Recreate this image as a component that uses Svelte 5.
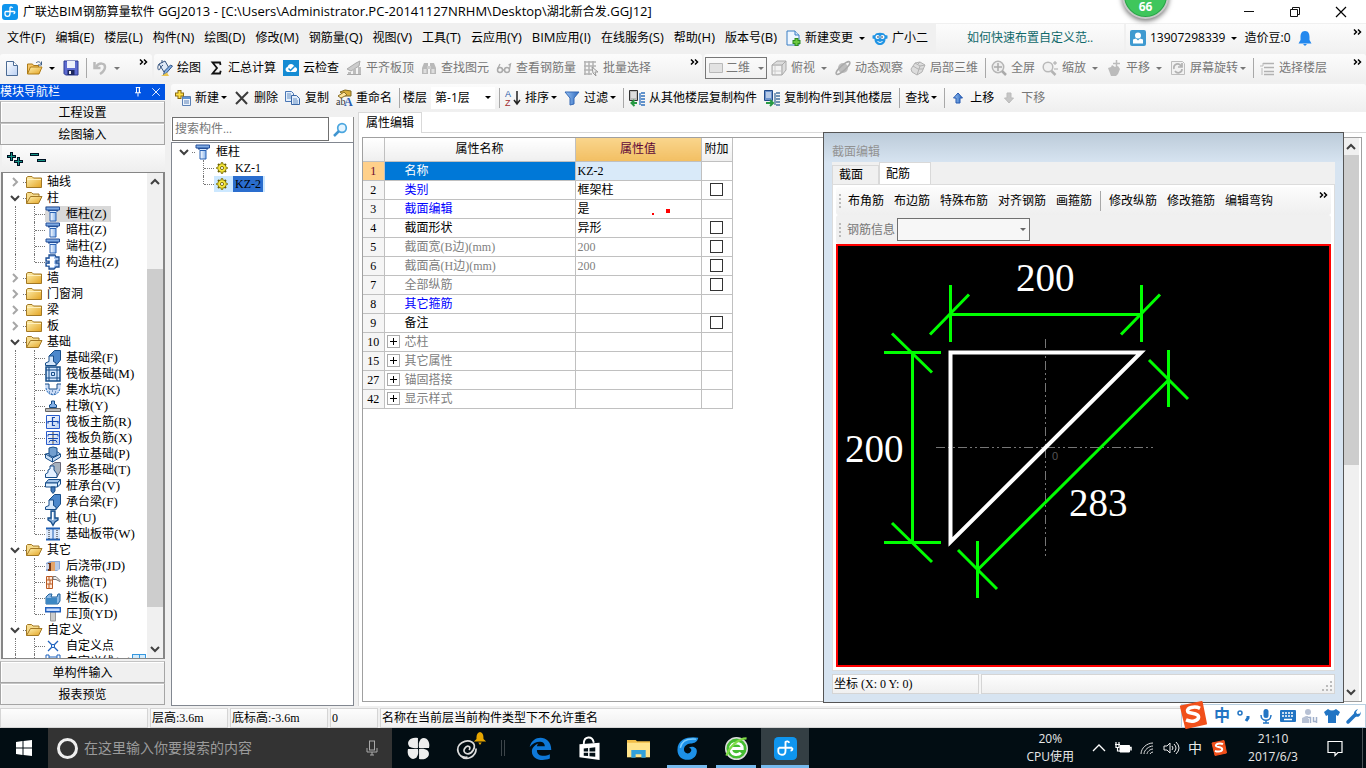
<script>
  const icons = {
    app: '<rect width="16" height="16" rx="3" fill="#0f95ee"/><path d="M8 3.200v6.300c0 4-5 3.500-5 .5M3.500 7.500h9M8 3.500c.8-.8 2.200-.6 2.600.6M12.500 7.500c.8.900 0 2-1 2M3.500 7.500C2.700 8.300 3 9.500 3 10" fill="none" stroke="#fff" stroke-width="1.300"/>',
    docplus: '<path d="M2 1h8l4 4v10H2z" fill="#eef6ff" stroke="#3b7fc4"/><path d="M10 1v4h4" fill="#cfe2f7" stroke="#3b7fc4"/><path d="M11.500 8v8M7.500 12h8" stroke="#2c8a22" stroke-width="4"/><path d="M11.500 9v6M8.500 12h6" stroke="#6cc93f" stroke-width="2"/>',
    robot: '<path d="M3 5C3 2 13 2 13 5l2.500.5v3L13.500 9c0 8-11 8-11 0L.5 8.500v-3z" fill="#2094e4"/><circle cx="5.500" cy="7" r="2" fill="#fff"/><circle cx="10.500" cy="7" r="2" fill="#fff"/><circle cx="6" cy="7" r=".8" fill="#124"/><circle cx="10" cy="7" r=".8" fill="#124"/><path d="M5.500 11.500q2.500 2 5 0" stroke="#fff" fill="none"/>',
    user: '<rect width="16" height="16" rx="2" fill="#3f9ad0"/><circle cx="8" cy="5.500" r="3" fill="#fff"/><path d="M3 13.500V9.500l3-1 2 2 2-2 3 1v4z" fill="#fff"/>',
    bell: '<path d="M8 1c3.500 0 4.500 3 4.500 6v3l2 3.500h-13l2-3.500V7c0-3 1-6 4.500-6z" fill="#2388ee"/><path d="M6 14h4l-2 2z" fill="#2388ee"/>',
    newdoc: '<path d="M2.500 1.500h7l4 4v10h-11z" fill="url(#paper)" stroke="#4b6b94"/><path d="M9.500 1.500v4h4" fill="#fff" stroke="#4b6b94"/>',
    open: '<path d="M.5 14V4h5l1 1.500h5V8" fill="#f6c667" stroke="#ab7a18"/><path d="m.5 14 3-7H15l-3 7z" fill="url(#gold)" stroke="#b07c14"/><path d="M9 3c2-2 4-1.500 5 1M14.500 1.500V5H11" fill="none" stroke="#3e5f87"/>',
    save: '<path d="M1 1h14v14H2.500L1 13.500z" fill="#5d6bd0" stroke="#2d3a93"/><path d="M4 1h8v7H4z" fill="#eef1fb"/><path d="M4.500 10h7v5h-7z" fill="#1d2860"/><path d="M6 11h2v3H6z" fill="#eee"/>',
    undo: '<path d="M2.500 2v6h6" fill="none" stroke="#bbb" stroke-width="2.500"/><path d="M4 7c3-5 9-4 9 0 0 3-2 5-5 7" fill="none" stroke="#bbb" stroke-width="2.500"/>',
    bucket: '<path d="m2 4 6-3 4 7-5 4z" fill="#dfe9f6" stroke="#34537f"/><path d="M2 4c-2 3-1 6 0 6s1-3 4-5M5 3V0" fill="none" stroke="#34537f"/><path d="m15.500 6-6 7-3 2 1-4 6-6z" fill="#7fabe2" stroke="#325688"/><path d="m10 12.500 2 3.500H4z" fill="#eac54f"/>',
    sigma: '<path d="M12.500 5 12 2.500H4.500L9 8l-4.500 5.500H12l.7-2.700" fill="none" stroke="#111" stroke-width="1.800"/>',
    cloud: '<rect width="16" height="16" fill="#148bd3"/><path d="M4.500 12c-3-1-2-5 0-5 1-4 6-4 7 0 3 0 3.500 4 1 5z" fill="#fff"/><path d="m5.500 8.500 2 2 4-4" fill="none" stroke="#148bd3" stroke-width="1.500"/>',
    slab: '<path d="m1 9 9-6 4-2-1 5-8 5z" fill="#ccc" stroke="#aaa"/><path d="M2 12h3v3H2zM7 9h3v6H7zM12 7h3v8h-3z" fill="#bdbdbd"/><path d="M1 14.500h14" stroke="#aaa"/>',
    binoc: '<path d="M1 14V8l2-5h4v11zM9 14V3h4l2 5v6z" fill="#b9b9b9"/><path d="M6 6h4v3H6z" fill="#ccc"/><path d="M2.500 9h3v4h-3zM10.500 9h3v4h-3z" fill="#dedede"/>',
    glasses: '<circle cx="4" cy="10" r="2.500" fill="none" stroke="#aaa" stroke-width="1.500"/><circle cx="11" cy="10" r="2.500" fill="none" stroke="#aaa" stroke-width="1.500"/><path d="M1.500 9 4 4M13.500 9l1-5-2 1M6.500 10h2" fill="none" stroke="#aaa" stroke-width="1.300"/>',
    grid: '<path d="M1 2h12M1 6h12M1 10h8M1 14h8M2 1v14M6 1v14M10 1v7" stroke="#b3b3b3" stroke-width="1.500"/><path d="m9 7 6 5h-3l1 4-3-3z" fill="#eee" stroke="#999"/>',
    flat: '<path d="M1.500 3.500h13v9h-13z" fill="#e2e2e2" stroke="#b9b9b9"/>',
    cube: '<path d="m1 5 5-4h9v9l-4 5H1z" fill="#ddd" stroke="#aaa"/><path d="M1 5h10v10M11 5l4-4" fill="none" stroke="#aaa"/><path d="M2 6h8v8H2z" fill="#f3f3f3"/><path d="M4 6v8M2 11h8" stroke="#ccc"/>',
    orbit: '<circle cx="8" cy="8" r="5" fill="#bdbdbd"/><ellipse cx="8" cy="8" rx="9" ry="2.500" transform="rotate(-42 8 8)" fill="none" stroke="#aaa" stroke-width="1.500"/>',
    part3d: '<path d="m1 9 4-6 5-1 5 3-3 7-5 3-5-3z" fill="#dcdcdc" stroke="#b2b2b2"/><path d="m5 3 5 3-3 9M10 6l5-1M3 6l5 3 5 0M10 2 7 5" fill="none" stroke="#b2b2b2"/>',
    full: '<circle cx="7" cy="7" r="5.700" fill="#eee" stroke="#b5b5b5" stroke-width="1.500"/><path d="M7 3v8M3 7h8" stroke="#aaa" stroke-width="1.500"/><path d="m11 11 4 4" stroke="#aaa" stroke-width="2.500"/>',
    zoom: '<circle cx="6" cy="7" r="4.800" fill="#f1f1f1" stroke="#b9b9b9" stroke-width="1.500"/><path d="m9.500 11 4 4" stroke="#b3b3b3" stroke-width="2.500"/><path d="M13 1v4M11 3h4M12 9h4" stroke="#aaa"/>',
    pan: '<path d="M2 8 5 7l1-2 3 2 3-1 2 3-2 5-2 2H5z" fill="#bbb"/><path d="M10.500 0v8M7 3.500h7" stroke="#bbb" stroke-width="1.500"/>',
    rotate: '<path d="M1.500 1.500h11l2 2v11h-13z" fill="#f2f2f2" stroke="#bdbdbd"/><path d="M4 9c-1-5 5-7 7-3M12 3v4H8M12 9c0 4-5 5-7 2" fill="none" stroke="#b2b2b2" stroke-width="1.700"/>',
    floors: '<path d="M4 3.500h11M5 7.500h10M5 11.500h10M5 14.500h10" stroke="#b2b2b2" stroke-width="1.700"/><path d="M1 6h3V3M3 8v7" fill="none" stroke="#bbb"/>',
    create: '<path d="M7.500 6.500h8v9h-8z" fill="#edf4fd" stroke="#5c81b5"/><path d="M8 7h7v2H8z" fill="#5f92d4"/><path d="M9 11h5M9 13h5" stroke="#5c81b5"/><path d="M4.500 0v9M0 4.500h9" stroke="#8a6b10" stroke-width="4"/><path d="M4.500 1v7M1 4.500h7" stroke="#ffdf45" stroke-width="2"/>',
    del: '<path d="m2 2 11 12M14 2 2 14" stroke="#3b3b3b" stroke-width="2"/>',
    copy: '<path d="M.5 1.500h6l2 2v8h-8z" fill="#e3eefb" stroke="#4a77b5"/><path d="M6.500 5.500h5l3 3v6h-8z" fill="#e3eefb" stroke="#3a67a5"/><path d="M2 4h4M2 6h4M2 8h4M8 9h4M8 11h5M8 13h5" stroke="#6790c4"/>',
    rename: '<path d="m4 2 5-2 6 1v5H9z" fill="#d7ad3c" stroke="#7d6623"/><path d="m2 6 6-4 3 3-6 3z" fill="#ffe39a" stroke="#896e26"/><text x="0" y="15" font-family="Liberation Serif" font-size="10" fill="#333">ab</text><text x="8" y="16" font-family="Liberation Serif" font-weight="bold" font-size="12" fill="#2c5eb0">A</text>',
    sort: '<text x="0" y="7" font-family="Liberation Sans" font-size="9" fill="#2b5daa">A</text><text x="0" y="16" font-family="Liberation Sans" font-size="9" fill="#a22d30">Z</text><path d="M12 1v12M9 10l3 4 3-4" fill="none" stroke="#222" stroke-width="1.500"/>',
    filter: '<path d="M1 2h14l-5 6v6l-4 1V8z" fill="url(#blue)" stroke="#3468b5"/>',
    fromfloor: '<path d="M.5.500h8v10h-8z" fill="#bbb" stroke="#333"/><path d="M2 3h5M2 5h5M2 7h5" stroke="#fff"/><path d="M12 3h4M12 6h4M12 9h4M12 12h4M12 15h4M11 3v12" stroke="#2f70bd" stroke-width="1.300"/><path d="M8 13H3M5.500 10 2.500 13l3 3" fill="none" stroke="#279a43" stroke-width="2"/>',
    tofloor: '<path d="M.5.500h8v10h-8z" fill="#6d93cd" stroke="#234c88"/><path d="M2 3h5M2 5h5M2 7h5" stroke="#fff"/><path d="M12 3h4M12 6h4M12 9h4M12 12h4M12 15h4M11 3v12" stroke="#44719f" stroke-width="1.300"/><path d="M2 13h6M6 10l3 3-3 3" fill="none" stroke="#279a43" stroke-width="2"/>',
    up: '<path d="m8 3 4.500 5H10v5H6V8H3.500z" fill="url(#blue)" stroke="#2558b0"/>',
    down: '<path d="M6 3h4v5h2.500L8 13 3.500 8H6z" fill="#c6c6c6" stroke="#bbb"/>',
    folder: '<path d="M.5 13.500v-10l1.500-1h4l1.500 1.500h8v9.500z" fill="url(#gold)" stroke="#a27824"/><path d="M1 5.500h14" stroke="#fff0bd"/>',
    folderopen: '<path d="M.5 13.500v-10l1-1h4l1.500 1.500h6v3" fill="#f7dc8d" stroke="#a27824"/><path d="m.5 13.500 4-7h11.500l-3.500 7z" fill="url(#gold)" stroke="#a27824"/>',
    column: '<path d="M1 1h13.500v3H1z" fill="#7fabe4" stroke="#244f98"/><path d="M3 4.500h10l-2 2H5z" fill="#d7e9ff" stroke="#244f98"/><path d="M5 6.500h6v8.500H5z" fill="url(#blueV)" stroke="#2861b3"/>',
    tie: '<path d="M4 1h6l1 2h3v4h-3v2h3v4h-3l-2 2H4v-3H1V9h3V7H1V4h3z" fill="#aac7f0" stroke="#1e4f94" stroke-width="1.300"/><path d="M5 3h4v10H5zM2 5h8v1.500H2zM2 10h8v1.500H2z" fill="#fff"/>',
    beam: '<path d="M4 6 9.500.5H15.500V10L11 15.500z" fill="#4b87cb" stroke="#164d89"/><path d="M4 6h4.500v5.500L11 13v2.500H.500V13L4 11.500z" fill="#d5e7fb" stroke="#164d89"/>',
    raft: '<path d="M1 1h14v14H1z" fill="#cfe4fc" stroke="#164d89" stroke-width="1.500"/><path d="M4 1v14M12 1v14M1 4h14M1 12h14M6.500 6.500h3v3h-3z" fill="none" stroke="#164d89"/>',
    pit: '<path d="M0 2h4v5h8V2h4c0 15-16 15-16 0z" fill="#cadcf7"/><path d="M0 2h4v5h8V2h4" fill="none" stroke="#164d89"/><path d="M1 6c1 9 13 9 14 0" fill="none" stroke="#2870bf" stroke-dasharray="2 1"/><path d="M4 10h1M7 9h1M10 10h1M6 12h1M9 12h1" stroke="#164d89"/>',
    pier: '<path d="M4.500 9.500V7l2-1V3h3v3l2 1v2.500z" fill="#83b0e7" stroke="#164d89"/><path d="M.5 10.500h15v3H.500z" fill="#bbb" stroke="#666"/>',
    main: '<path d="M1.500 1.500h13v13h-13z" fill="url(#paper)" stroke="#2a5ccc"/><path d="M10 3.500H7.500v8H10M3 9.500V7.500h10v2" fill="none" stroke="#1649b0" stroke-width="1.200"/>',
    neg: '<path d="M1.500 1.500h13v13h-13z" fill="url(#paper)" stroke="#2a5ccc"/><path d="M8 2v12" stroke="#999" stroke-width="2"/><path d="M3 6.500V4.500h10v2M3 8.500h10M4 12.500l1-2h6l1 2" fill="none" stroke="#1649b0"/>',
    isolated: '<path d="m.5 8 5-1 7-1 3 2v3l-8 5-7-4z" fill="#c8def5" stroke="#164d89"/><path d="m4 2 4-1 4 1v7l-4 2-4-2z" fill="#729fcf" stroke="#164d89"/><path d="M.5 8l7 4 8-4M7.500 12v4" fill="none" stroke="#164d89"/>',
    strip: '<path d="m5 4 5-3.500h5.500V9L12 15z" fill="#a6b2bf" stroke="#667"/><path d="M5 4h4v4l3 4v3.500H.500V12L3 10.500V8l2-1z" fill="#e3f0ff" stroke="#164d89"/>',
    cap: '<path d="m.5 5 3-3.500h12l-3 3.500z" fill="#a5c6ea" stroke="#164d89"/><path d="M.5 5h12v4H.500zM12.500 5l3-3.500V6l-3 3" fill="#dceeff" stroke="#164d89"/><path d="M6 9h4v4l-2 2.500L6 13z" fill="#447bbb" stroke="#164d89"/>',
    pile: '<path d="M6 1h4v7h3v2l-3 2-2 3.500L6 12l-3-2V8h3z" fill="#83abd7" stroke="#164d89" stroke-width="1.300"/><path d="M7 2h1.500v8H7z" fill="#fff"/>',
    band: '<path d="M1 4h14v8H1z" fill="#dbe9fc"/><path d="M1 2.500h14M1 13.500h14" stroke="#1f5fb4" stroke-width="2"/><path d="M8 3v10" stroke="#1f5fb4"/><path d="M4 4v9M12 4v9" stroke="#222" stroke-dasharray="1 1"/>',
    post: '<path d="m1 5 4-2h10v8l-3 2H1z" fill="#8ba9d5"/><path d="M3 5h4v8H3z" fill="#763714"/><path d="M6 4h4v9H6z" fill="#e4a469"/><path d="M10 4h4v8h-4z" fill="#b6cae7"/><path d="M1 6h3v5H1z" fill="#c9d5ea"/>',
    eave: '<path d="M1.500 2.500h6v12h-6z" fill="#ffe9d8" stroke="#ba5821"/><path d="M1 6h6M1 10h6M4 3v3M5 6v4M4 10v5" stroke="#ba5821"/><path d="M8 2.500h3l4 4v1l-4-2H8z" fill="#eee" stroke="#777"/>',
    rail: '<path d="m1 7 3-3h3l-1 3h6l1-3h2v7l-2 3H1z" fill="#8bb9e6" stroke="#23639c"/><path d="M1 8h11v6H1z" fill="#3d87c3"/>',
    top: '<path d="M5.500 6h5v9h-5z" fill="#ccc" stroke="#999"/><path d="M.7 1.700h14.600v4H.700z" fill="#c6dcff" stroke="#2461bd" stroke-width="1.400"/>',
    point: '<path d="M3 3c2 2 3 3 5 5 2-2 3-3 5-5M3 13c2-2 3-3 5-5 2 2 3 3 5 5" fill="none" stroke="#1f62bd" stroke-width="1.300"/><path d="M6.500 6.500h3v3h-3z" fill="#d6e8ff" stroke="#1f62bd"/>',
    line: '<path d="M2 3h12" stroke="#1f62bd"/><path d="M1 1h3v4H1zM12 1h3v4h-3z" fill="#fff" stroke="#1f62bd"/>',
    gear: '<path d="M8 1.500v13M1.500 8h13M3.500 3.500l9 9M12.500 3.500l-9 9" stroke="#6b6000" stroke-width="2.500"/><circle cx="8" cy="8" r="4.800" fill="#f7e83c" stroke="#6b6000"/><path d="M8 2v3M8 11v3M2 8h3M11 8h3M5 5l1 1M10 10l1 1M11 5l-1 1M5 11l1-1" stroke="#f7e83c"/><circle cx="8" cy="8" r="1.800" fill="#fff" stroke="#6b6000"/>',
    search: '<circle cx="9" cy="6" r="4.300" fill="#e4f4ff" stroke="#4ba6df" stroke-width="1.700"/><path d="m6 9-5 5" stroke="#4095d0" stroke-width="2.500"/>',
    pin: '<path d="M5 2h6M6 2v7M10 2v7M4 9h8M8 9v5" fill="none" stroke="#fff" stroke-width="1.300"/><path d="M9 2h1.500v7H9z" fill="#fff"/>',
    close: '<path d="m3 3 10 10M13 3 3 13" stroke="currentColor" stroke-width="1.200"/>',
    min: '<path d="M3 7.500h10" stroke="#111"/>',
    restore: '<path d="M3.500 5.500h7v7h-7zM5.500 5V3.500h7v7H11" fill="none" stroke="#111"/>',
    plusplus: '<path d="M4.500 1v9M0 5.500h9M11.500 6v9M7 10.500h9" stroke="#012" stroke-width="3"/><path d="M4.500 2v7M1 5.500h7M11.500 7v7M8 10.500h7" stroke="#159386"/>',
    minusminus: '<path d="M0 3.500h9M7 9.500h9" stroke="#012" stroke-width="3"/><path d="M1 3.500h7M8 9.500h7" stroke="#159386"/>',
    win: '<path d="m0 2 6.500-1v6.500H0zM7.500.9 16 0v7.500H7.500zM0 8.500h6.500V15L0 14zM7.500 8.500H16V16l-8.500-1z" fill="#fff"/>',
    sogou: '<path d="m1 3 12-2.500L15.500 13 4 15.500z" fill="#f1501b" stroke="#f1501b" stroke-linejoin="round"/><path d="M12 4.200c-3-1.500-8-.4-7 1.800.6 1.500 6.200.5 6.200 3.200 0 2.300-4.200 3-7.200 1.600" fill="none" stroke="#fff" stroke-width="2"/>',
    comma: '<circle cx="4" cy="5" r="2" fill="none" stroke="#2275c4" stroke-width="1.500"/><path d="M12 8v2l-2 3" fill="none" stroke="#2275c4" stroke-width="3"/>',
    mic: '<rect x="5.500" y="1" width="5" height="9" rx="2.500" fill="#2275c4"/><path d="M3 7c0 7 10 7 10 0M8 12v3M5 15h6" fill="none" stroke="#2275c4" stroke-width="1.500"/>',
    keyboard: '<rect y="2" width="16" height="12" rx="1" fill="#2275c4"/><path d="M2 5h12M2 8h12" stroke="#fff" stroke-width="1.500" stroke-dasharray="2 1"/><path d="M4 11.500h8" stroke="#fff" stroke-width="1.500"/>',
    person: '<circle cx="6" cy="4" r="3" fill="#b7c1d4"/><path d="M0 15V10l4-2h4l3 2v5z" fill="#b7c1d4"/><path d="M6 9.500h2.500V15M11.500 9v4.500h3V9M14.500 9v6" fill="none" stroke="#fff" stroke-width="3"/><path d="M6 9.500h2.500V15M11.500 9v4.500h3M14.500 9v6" fill="none" stroke="#9fafca" stroke-width="1.500"/>',
    shirt: '<path d="M4 1q4 3 8 0l4 3-2 4-2-1v8H4V7L2 8 0 4z" fill="#2275c4"/>',
    wrench: '<path d="M2 14 9 7" stroke="#2275c4" stroke-width="3.500" stroke-linecap="round"/><path d="M14.500 3.500c1 4-2 6-4.500 5-3-1-3-6 2-7.500L10 4l1 2 3-.5z" fill="#2275c4"/>',
    taskmic: '<rect x="5.500" y="1" width="5" height="9" fill="none" stroke="#aaa"/><path d="M3 8v4h10V8M8 12v3M6 15h4" fill="none" stroke="#aaa"/>',
    petals: '<g fill="#eee"><path d="M7.600 7.600V.7C3-.5-1 3 1.500 6.500c2 1.500 4 1.500 6.100 1.100z"/><path d="M8.400 7.600h6.900C16.500 3 13-1 9.500 1.500c-1.500 2-1.500 4-1.100 6.100z"/><path d="M8.400 8.400v6.900c4.600 1.200 8.600-2.300 6.100-5.800-2-1.500-4-1.500-6.100-1.100z"/><path d="M7.600 8.400H.7C-.5 13 3 17 6.500 14.500c1.500-2 1.500-4 1.100-6.100z"/></g>',
    spiral: '<path d="M8 14c-7 1-9-7-4-10s11 0 8 5-8 2-6-1 5-1 3 1M3 13c4 4 11 1 11-5" fill="none" stroke="#ddd" stroke-width="1.200"/>',
    goldbell: '<path d="M8 1c4 1 4 5 4 8l3 3H1l3-3c0-3 0-7 4-8zM6 13h4l-2 3z" fill="#e6a500"/>',
    edge: '<path d="M.5 7C2-2 15.500-2 15.500 9H5.500c0 4.500 5 5 9 3v3C8 17.500 2 15 2 10c0-2.500 2-4.500 4.500-5.500C5.800 5.300 5.600 6 5.500 6.500h5.500C11 2 4 2.500.5 7z" fill="#0e78d8"/>',
    store: '<path d="m1 5 14-1v12L1 14z" fill="#fff"/><path d="M4 5c0-6 6-6 7-1" fill="none" stroke="#fff" stroke-width="1.300"/><path d="m4 8 3-.3V10H4zM8 7.600l4-.4V10H8zM4 11h3v2.300L4 13zM8 11h4v2.800l-4-.4z" fill="#031016"/>',
    explorer: '<path d="M0 2h6l1 1h9v11H0z" fill="#f1bd48"/><path d="M0 4h16v10H0z" fill="#ffe38b"/><path d="M3 14.500V9h10v5.500h-3V12H6v2.500z" fill="#32a1db"/>',
    glodon: '<path d="M15.500.5C11-.5 1 0 1 9c0 9 13 9 13.500 1 0-3-3.500-4-5.500-2.500 3 .5 1.500 4-1 4C4 10.500 5 5 10 4.500c3 0 5-1.500 5.500-4z" fill="#1d91e8"/><path d="M14 1.500c-5-.5-10 .5-11 6" fill="none" stroke="#7ccdff"/>',
    greene: '<circle cx="8" cy="8" r="7.500" fill="#45bd32" stroke="#ddd"/><path d="M4 8h8c0-5-8-5-8 0 0 5 5 5 7 3" fill="none" stroke="#fff" stroke-width="2"/><path d="M1 13C3 7 9 1 15 1" fill="none" stroke="#80dc48" stroke-width="1.500"/>',
    caret: '<path d="m2 11 6-6 6 6" fill="none" stroke="#fff" stroke-width="1.300"/>',
    power: '<path d="M5 5.500h9.500v6.500H5z" fill="#fff" stroke="#fff"/><path d="M14.500 7.500h1.500v3" fill="none" stroke="#fff" stroke-width="1.500"/><path d="M0 4.500h5M1 2v2M4 2v2M1 4.500v3h3V5M2.500 8v3H5" fill="none" stroke="#fff" stroke-width="1.200"/>',
    wifi: '<path d="M2 14C2 8 8 3 14 3M5 14c0-4 5-8 9-8M8 14c0-2 3-5 6-5M11 14q1-2 3-2" fill="none" stroke="#ddd"/>',
    sound: '<path d="M1 6h3l3-3v10l-3-3H1zM9 6q2 2 0 4M11 4q4 4 0 8M13 2q6 6 0 12" fill="none" stroke="#eee"/>',
    note: '<path d="M1 1.500h14v11h-4l-3 3v-3H1z" fill="none" stroke="#fff" stroke-width="1.200"/>'
  };

  const title = '广联达BIM钢筋算量软件 GGJ2013 - [C:\\Users\\Administrator.PC-20141127NRHM\\Desktop\\湖北新合发.GGJ12]';
  const menus = ['文件(F)', '编辑(E)', '楼层(L)', '构件(N)', '绘图(D)', '修改(M)', '钢筋量(Q)', '视图(V)', '工具(T)', '云应用(Y)', 'BIM应用(I)', '在线服务(S)', '帮助(H)', '版本号(B)'];

  // Latin runs are set one size larger than the Chinese text around them.
  const split = (s) => s.split(/([\x20-\x7e]+)/).filter(Boolean);
  const isLatin = (s) => /^[\x20-\x7e]/.test(s);

  const drawTools = [
    { i: 'bucket', t: '绘图' }, { i: 'sigma', t: '汇总计算' }, { i: 'cloud', t: '云检查' },
    { i: 'slab', t: '平齐板顶', off: true }, { i: 'binoc', t: '查找图元', off: true },
    { i: 'glasses', t: '查看钢筋量', off: true }, { i: 'grid', t: '批量选择', off: true }
  ];
  const viewTools = [
    { i: 'cube', t: '俯视', off: true, drop: true }, { i: 'orbit', t: '动态观察', off: true }, { i: 'part3d', t: '局部三维', off: true },
    { sep: true }, { i: 'full', t: '全屏', off: true }, { i: 'zoom', t: '缩放', off: true, drop: true },
    { i: 'pan', t: '平移', off: true, drop: true }, { i: 'rotate', t: '屏幕旋转', off: true, drop: true, tight: true },
    { sep: true }, { i: 'floors', t: '选择楼层', off: true }
  ];
  const compTools1 = [
    { i: 'create', t: '新建', drop: true, tight: true }, { i: 'del', t: '删除' }, { i: 'copy', t: '复制' }, { i: 'rename', t: '重命名' }
  ];
  const compTools2 = [
    { sep: true }, { i: 'sort', t: '排序', drop: true, tight: true }, { i: 'filter', t: '过滤', drop: true, tight: true },
    { sep: true }, { i: 'fromfloor', t: '从其他楼层复制构件' }, { i: 'tofloor', t: '复制构件到其他楼层' },
    { sep: true }, { t: '查找', drop: true, tight: true }, { sep: true }, { i: 'up', t: '上移' }, { i: 'down', t: '下移', off: true }
  ];

  const groups = [
    { t: '轴线' },
    { t: '柱', kids: [['column', '框柱(Z)'], ['column', '暗柱(Z)'], ['column', '端柱(Z)'], ['tie', '构造柱(Z)']] },
    { t: '墙' }, { t: '门窗洞' }, { t: '梁' }, { t: '板' },
    { t: '基础', kids: [['beam', '基础梁(F)'], ['raft', '筏板基础(M)'], ['pit', '集水坑(K)'], ['pier', '柱墩(Y)'], ['main', '筏板主筋(R)'], ['neg', '筏板负筋(X)'], ['isolated', '独立基础(P)'], ['strip', '条形基础(T)'], ['cap', '桩承台(V)'], ['beam', '承台梁(F)'], ['pile', '桩(U)'], ['band', '基础板带(W)']] },
    { t: '其它', kids: [['post', '后浇带(JD)'], ['eave', '挑檐(T)'], ['rail', '栏板(K)'], ['top', '压顶(YD)']] },
    { t: '自定义', kids: [['point', '自定义点'], ['line', '自定义线(X)']] }
  ];

  const rows = [
    { n: 1, name: '名称', value: 'KZ-2', tone: 'picked' },
    { n: 2, name: '类别', value: '框架柱', tone: 'blue', box: true },
    { n: 3, name: '截面编辑', value: '是', tone: 'blue', marks: true },
    { n: 4, name: '截面形状', value: '异形', tone: '', box: true },
    { n: 5, name: '截面宽(B边)(mm)', value: '200', tone: 'grey', box: true },
    { n: 6, name: '截面高(H边)(mm)', value: '200', tone: 'grey', box: true },
    { n: 7, name: '全部纵筋', value: '', tone: 'grey', box: true },
    { n: 8, name: '其它箍筋', value: '', tone: 'blue' },
    { n: 9, name: '备注', value: '', tone: '', box: true },
    { n: 10, name: '芯柱', value: '', tone: 'grey', more: true },
    { n: 15, name: '其它属性', value: '', tone: 'grey', more: true },
    { n: 27, name: '锚固搭接', value: '', tone: 'grey', more: true },
    { n: 42, name: '显示样式', value: '', tone: 'grey', more: true }
  ];

  const barTools = ['布角筋', '布边筋', '特殊布筋', '对齐钢筋', '画箍筋', null, '修改纵筋', '修改箍筋', '编辑弯钩'];
</script>

{#snippet icon(name, cls = '')}
  <svg class="icon {cls}" viewBox="0 0 16 16" aria-hidden="true">{@html icons[name]}</svg>
{/snippet}

{#snippet mixed(text)}{#each split(text) as part}{#if isLatin(part)}<span class="latin">{part}</span>{:else}{part}{/if}{/each}{/snippet}

{#snippet tools(list)}
  {#each list as b}
    {#if b.sep}
      <span class="sep"></span>
    {:else}
      <button class="tool" class:off={b.off} class:tight={b.tight}>
        {#if b.i}{@render icon(b.i)}{/if}<span>{b.t}</span>{#if b.drop}<i class="drop"></i>{/if}
      </button>
    {/if}
  {/each}
{/snippet}

{#snippet chevrons()}
  <button class="overflow" aria-label="更多"><svg viewBox="0 0 9 6"><path d="m1 .5 2.500 2.500L1 5.500M5 .5 7.500 3 5 5.500" /></svg></button>
{/snippet}

<svg class="defs" aria-hidden="true">
  <defs>
    <linearGradient id="gold" x1="0" y1="0" x2="1" y2="1"><stop offset="0" stop-color="#fff3b5" /><stop offset="1" stop-color="#e3a321" /></linearGradient>
    <linearGradient id="paper" x1="0" y1="0" x2="1" y2="1"><stop offset="0" stop-color="#fff" /><stop offset="1" stop-color="#b9d0f3" /></linearGradient>
    <linearGradient id="blue" x1="0" y1="0" x2="1" y2="0"><stop offset="0" stop-color="#9ac4f5" /><stop offset="1" stop-color="#2b67bd" /></linearGradient>
    <linearGradient id="blueV" x1="0" y1="0" x2="1" y2="0"><stop offset="0" stop-color="#fff" /><stop offset="1" stop-color="#86b2ec" /></linearGradient>
  </defs>
</svg>

<div class="shell">
  <header class="titlebar">
    {@render icon('app')}
    <h1>{@render mixed(title)}</h1>
    <div class="winbtns">
      <button aria-label="最小化">{@render icon('min')}</button>
      <button aria-label="还原">{@render icon('restore')}</button>
      <button aria-label="关闭">{@render icon('close')}</button>
    </div>
    <div class="score">66</div>
  </header>

  <nav class="menubar">
    <div class="menus">
      {#each menus as m}<button><span>{@render mixed(m)}</span></button>{/each}
    </div>
    <button class="tool">{@render icon('docplus')}<span>新建变更</span><i class="drop"></i></button>
    <button class="tool helper">{@render icon('robot')}<span>广小二</span></button>
    <a class="tip" href="#tip">如何快速布置自定义范..</a>
    <div class="account">
      <button class="tool">{@render icon('user')}<span>13907298339</span><i class="drop"></i></button>
      <span>造价豆:0</span>
      {@render icon('bell')}
      {@render chevrons()}
    </div>
  </nav>

  <div class="toolbar">
    <div class="strip file">
      <button aria-label="新建">{@render icon('newdoc')}</button>
      <button class="tool" aria-label="打开">{@render icon('open')}<i class="drop"></i></button>
      <button aria-label="保存">{@render icon('save')}</button>
      <span class="sep"></span>
      <button class="tool off" aria-label="撤销">{@render icon('undo')}<i class="drop"></i></button>
      {@render chevrons()}
    </div>
    <div class="strip draw">{@render tools(drawTools)}{@render chevrons()}</div>
    <div class="strip view">
      <button class="tool off mode">{@render icon('flat')}<span>二维</span><i class="drop"></i></button>
      {@render tools(viewTools)}{@render chevrons()}
    </div>
  </div>

  <main>
    <aside class="navpane">
      <div class="navhead"><span>模块导航栏</span>{@render icon('pin')}{@render icon('close')}</div>
      <button class="bar">工程设置</button>
      <button class="bar">绘图输入</button>
      <div class="navtools">
        <button aria-label="全部展开">{@render icon('plusplus')}</button>
        <button aria-label="全部折叠">{@render icon('minusminus')}</button>
      </div>
      <div class="treebox">
        <ul class="tree">
          {#each groups as g}
            <li class="row">
              <svg class="chev" class:shut={!g.kids} viewBox="0 0 10 10"><path d="m1 3 4 4 4-4" /></svg>
              <i class="stub short"></i>
              {@render icon(g.kids ? 'folderopen' : 'folder')}
              <span class="label">{g.t}</span>
            </li>
            {#each g.kids ?? [] as k, n}
              <li class="row kid" class:last={n === g.kids.length - 1}>
                <i class="rail0"></i><i class="rail1"></i><i class="stub"></i>
                <span class="leaf" class:on={k[1] === '框柱(Z)'}>{@render icon(k[0])}<span class="label">{@render mixed(k[1])}</span></span>
              </li>
            {/each}
          {/each}
        </ul>
        <div class="scroll">
          <svg class="chev flip" viewBox="0 0 10 10"><path d="m1 3 4 4 4-4" /></svg>
          <div class="track"><div class="thumb"></div></div>
          <svg class="chev" viewBox="0 0 10 10"><path d="m1 3 4 4 4-4" /></svg>
        </div>
        <i class="peek"></i>
      </div>
      <button class="bar">单构件输入</button>
      <button class="bar">报表预览</button>
    </aside>

    <section class="work">
      <div class="strip comp">
        {@render tools(compTools1)}
        <span class="sep"></span>
        <label for="floor">楼层</label>
        <div class="pick"><select id="floor"><option>第-1层</option></select><i class="drop"></i></div>
        {@render tools(compTools2)}
      </div>

      <div class="panes">
        <div class="comppane">
          <div class="searchrow">
            <input type="text" placeholder="搜索构件..." aria-label="搜索构件" />
            <button aria-label="搜索">{@render icon('search')}</button>
          </div>
          <ul class="tree comptree">
            <li class="row"><svg class="chev" viewBox="0 0 10 10"><path d="m1 3 4 4 4-4" /></svg><i class="stub short"></i>{@render icon('column')}<span class="label">框柱</span></li>
            <li class="row kid"><i class="rail1"></i><i class="stub"></i><span class="leaf">{@render icon('gear')}<span class="label">KZ-1</span></span></li>
            <li class="row kid last"><i class="rail1"></i><i class="stub"></i><span class="leaf chosen">{@render icon('gear')}<span class="label">KZ-2</span></span></li>
          </ul>
        </div>

        <div class="props">
          <div class="tabs"><button class="tab">属性编辑</button></div>
          <div class="sheet">
            <table>
              <colgroup><col class="c1" /><col class="c2" /><col class="c3" /><col class="c4" /></colgroup>
              <thead><tr><th></th><th>属性名称</th><th class="hot">属性值</th><th>附加</th></tr></thead>
              <tbody>
                {#each rows as r}
                  <tr class={r.tone}>
                    <th scope="row">{r.n}</th>
                    <td class="name">{#if r.more}<button class="plus" aria-label="展开{r.name}"></button>{/if}{r.name}</td>
                    <td class="val">{r.value}{#if r.marks}<i class="dot small"></i><i class="dot"></i>{/if}</td>
                    <td class="chk">{#if r.box}<input type="checkbox" aria-label="附加{r.name}" />{/if}</td>
                  </tr>
                {/each}
              </tbody>
            </table>
            <div class="scroll">
              <svg class="chev flip" viewBox="0 0 10 10"><path d="m1 3 4 4 4-4" /></svg>
              <div class="track"><div class="thumb"></div></div>
              <svg class="chev" viewBox="0 0 10 10"><path d="m1 3 4 4 4-4" /></svg>
            </div>
          </div>

          <div class="dialog">
            <h2>截面编辑</h2>
            <div class="dtabs"><button>截面</button><button class="front">配筋</button></div>
            <div class="dbody">
              <div class="strip dstrip">
                <i class="grip"></i>
                {#each barTools as b}{#if b}<button>{b}</button>{:else}<span class="sep"></span>{/if}{/each}
                {@render chevrons()}
              </div>
              <div class="strip dinfo">
                <i class="grip"></i>
                <label for="rebar">钢筋信息</label>
                <div class="pick"><select id="rebar"><option></option></select><i class="drop"></i></div>
              </div>
              <svg class="canvas" viewBox="0 0 495 423" preserveAspectRatio="xMinYMin meet" role="img" aria-label="截面图">
                <g stroke="#767676" stroke-width="1" stroke-dasharray="9 3 2 3 2 3" fill="none"><path d="M100 203.500h220M209.500 95v219" /></g>
                <text x="216" y="216" class="origin">0</text>
                <path d="M114.500 108.500H305L114.500 298z" fill="none" stroke="#fff" stroke-width="4" />
                <g stroke="#0f0" stroke-width="3" fill="none">
                  <path d="M114.500 70.500h191M114.500 41v57M305.500 41v57M94 90.500l39-40M285 90.500l39-40" />
                  <path d="M76.500 109v190M48 108.500h57M48 298.500h57M56 89.500l40 39M56 279l40 39" />
                  <path d="M332.500 136 141.500 326M332.500 106v57M141.500 297v57M313 116l39 39M122 306l39 39" />
                </g>
                <g class="dim"><text x="180" y="47">200</text><text x="9" y="218">200</text><text x="233" y="272">283</text></g>
              </svg>
            </div>
            <div class="dstatus"><span>坐标 (X: 0 Y: 0)</span><span><svg viewBox="0 0 12 12"><path d="M9 1h2v2H9zM5 5h2v2H5zM9 5h2v2H9zM1 9h2v2H1zM5 9h2v2H5zM9 9h2v2H9z" /></svg></span></div>
          </div>
        </div>
      </div>
    </section>
  </main>

  <div class="status">
    <span></span><span>层高:3.6m</span><span>底标高:-3.6m</span><span>0</span><span>名称在当前层当前构件类型下不允许重名</span>
    <div class="ime">
      {@render icon('sogou', 'big')}<b>中</b>{@render icon('comma')}{@render icon('mic')}{@render icon('keyboard')}{@render icon('person')}{@render icon('shirt')}{@render icon('wrench')}
    </div>
  </div>

  <footer class="taskbar">
    <button class="start" aria-label="开始">{@render icon('win')}</button>
    <label class="find"><i></i><input type="text" placeholder="在这里输入你要搜索的内容" />{@render icon('taskmic')}</label>
    <div class="apps">
      <button aria-label="应用">{@render icon('petals')}</button>
      <button class="alarm" aria-label="通知">{@render icon('spiral')}{@render icon('goldbell', 'mini')}</button>
      <span class="split"></span>
      <button aria-label="Edge">{@render icon('edge')}</button>
      <button aria-label="商店">{@render icon('store')}</button>
      <button aria-label="文件资源管理器">{@render icon('explorer')}</button>
      <button class="run" aria-label="广联达">{@render icon('glodon')}</button>
      <button class="run" aria-label="浏览器">{@render icon('greene')}</button>
      <button class="run active" aria-label="钢筋算量">{@render icon('app')}</button>
    </div>
    <div class="cpu">20%<br />CPU使用</div>
    <div class="tray">
      {@render icon('caret')}{@render icon('power')}{@render icon('wifi')}{@render icon('sound')}<b>中</b>{@render icon('sogou')}
    </div>
    <div class="clock">21:10<br />2017/6/3</div>
    <button class="notes" aria-label="操作中心">{@render icon('note')}</button>
  </footer>
</div>

<style>
  :global(body) { margin: 0; background: #f0f0f0; }
  .shell, .shell * { box-sizing: border-box; }
  .shell {
    display: flex; flex-direction: column; height: 100vh; overflow: hidden; color: #000; background: #f0f0f0;
    font: 12px/16px "Open Sans", "Noto Sans CJK SC", sans-serif; white-space: nowrap;
  }
  button, input, select { font: inherit; color: inherit; margin: 0; padding: 0; border: 0; background: none; border-radius: 0; }
  button { display: flex; align-items: center; flex: none; }
  h1, h2 { margin: 0; font: inherit; }
  ul { list-style: none; margin: 0; padding: 0; }
  i { display: block; flex: none; }
  .latin { font-size: 13px; line-height: 12px; white-space: pre; }
  .defs { position: absolute; width: 0; height: 0; }
  .icon { width: 16px; height: 16px; flex: none; display: block; overflow: visible; }
  .drop { border: 3px solid transparent; border-top-color: currentColor; border-bottom: 0; }
  .sep { width: 1px; height: 20px; background: #a8a8a8; flex: none; margin-right: -2px; }
  .overflow { margin-left: auto; align-self: flex-start; padding-top: 5px; }
  .overflow svg { width: 9px; height: 6px; fill: none; stroke: #000; stroke-width: 1.5; }

  .titlebar { position: relative; display: flex; align-items: center; gap: 5px; height: 23px; flex: none; padding-left: 2px; background: #fff; }
  .winbtns { display: flex; margin-left: auto; padding-right: 2px; }
  .winbtns button { width: 46px; height: 20px; justify-content: center; }
  .score {
    position: absolute; right: 197px; top: -28px; width: 47px; height: 47px; border-radius: 50%; background: #3fc65c; border: 2px solid #c9c9c9;
    box-shadow: inset 0 0 0 1px #2c9f49, 0 2px 5px #777; color: #fff; font-weight: bold; line-height: 16px; padding-top: 25px; text-align: center;
  }

  .menubar { display: flex; align-items: center; height: 30px; flex: none; padding-left: 7px; margin-bottom: 1px; }
  .menus { display: flex; gap: 10px; margin-right: 8px; }
  .tool { gap: 4px; }
  .tool .drop { margin: 0 1px 0 2px; }
  .tool.tight .drop { margin: 0 0 0 -2px; }
  .off { color: #777; }
  .helper { margin-left: 6px; margin-right: 8px; }
  .tip { flex: 1; text-align: center; color: #11696b; text-decoration: none; line-height: 28px; background: linear-gradient(#fcfcfc, #f1f1f1); }
  .account { display: flex; align-items: center; gap: 6px; width: 240px; height: 28px; margin-left: 2px; padding: 0 4px; background: linear-gradient(#fcfcfc, #f1f1f1); }

  .toolbar { display: flex; gap: 2px; height: 28px; flex: none; margin-bottom: 2px; }
  .strip { display: flex; align-items: center; gap: 7px; background: linear-gradient(#fcfcfc, #efefef); border-radius: 3px; }
  .file { flex: 0 0 152px; padding: 0 4px; }
  .draw { flex: 0 0 548px; padding: 0 3px; }
  .view { flex: 1; padding: 0 4px 0 1px; }
  .mode { border: 1px solid #777; height: 22px; width: 62px; padding: 0 2px; gap: 2px; margin-right: -3px; }
  .mode .drop { margin: 0 0 0 auto; }

  main { display: flex; flex: 1; min-height: 0; gap: 6px; }
  .navpane { display: flex; flex-direction: column; width: 165px; flex: none; font-family: "Liberation Serif", "Noto Sans CJK SC", sans-serif; padding-bottom: 3px; }
  .navhead { display: flex; align-items: center; gap: 2px; height: 16px; margin-bottom: 1px; background: #0054e3; color: #fff; padding-right: 1px; flex: none; }
  .navhead span { flex: 1; }
  .navhead .icon { width: 16px; height: 12px; }
  .bar { justify-content: center; height: 22px; padding-top: 1px; border: 1px solid #a5a5a5; border-top-color: #c4c4c4; background: #f0f0f0; box-shadow: inset 1px 1px #fff; }
  .navtools { display: flex; align-items: center; gap: 7px; height: 27px; flex: none; padding-left: 5px; margin-left: 2px; background: linear-gradient(#fcfcfc, #eee); }
  .treebox { position: relative; flex: 1; min-height: 0; overflow: hidden; display: flex; background: #fff; border: 2px solid #868686; border-width: 1px 2px; margin: 0 0 2px 1px; }
  .tree { flex: 1; min-width: 0; padding-top: 1px; }
  .row { display: flex; align-items: center; height: 16px; }
  .row > .chev { margin-left: 7px; }
  .chev { width: 10px; height: 10px; flex: none; fill: none; stroke: #404040; stroke-width: 2; }
  .chev.shut { transform: rotate(-90deg); stroke: #a6a6a6; }
  .chev.flip { transform: rotate(180deg); }
  .stub { width: 10px; border-top: 1px dotted #777; }
  .stub.short { width: 3px; margin: 0 0 0 3px; }
  .row > .label { padding-left: 5px; }
  .rail0 { width: 13px; height: 16px; border-right: 1px dotted #777; }
  .rail1 { width: 19px; height: 16px; border-right: 1px dotted #777; }
  .last .rail1 { height: 8px; align-self: flex-start; }
  .leaf { display: flex; align-items: center; height: 16px; gap: 5px; }
  .leaf.on { background: #d9d9d9; padding-right: 4px; }
  .scroll { display: flex; flex-direction: column; align-items: center; justify-content: space-between; width: 16px; flex: none; background: #f0f0f0; padding: 4px 0; }
  .track { flex: 1; width: 100%; margin: 3px 0; }
  .thumb { background: #cdcdcd; }
  .treebox .thumb { margin-top: 79px; height: 338px; }
  .peek { position: absolute; left: 129px; bottom: 0; width: 14px; height: 4px; border: 1px solid #3798df; border-bottom: 0; background: linear-gradient(#3798df, #3798df) center / 1px 100% no-repeat, #d4ecfc; }

  .work { flex: 1; min-width: 0; display: flex; flex-direction: column; }
  .comp { height: 27px; flex: none; padding-left: 4px; margin-bottom: 1px; }
  .comp label { margin: 0 -3px 0 -2px; }
  .pick { position: relative; display: flex; align-items: center; }
  .pick select { appearance: none; width: 100%; height: 22px; background: #fff; padding: 0 4px; outline: 0; }
  .pick .drop { position: absolute; right: 4px; }
  .comp .pick { width: 64px; margin-right: -3px; }
  .panes { flex: 1; min-height: 0; display: flex; gap: 4px; }
  .comppane { width: 183px; flex: none; display: flex; flex-direction: column; padding: 5px 0 2px; font-family: "Liberation Serif", "Noto Sans CJK SC", sans-serif; }
  .searchrow { display: flex; height: 25px; flex: none; background: #fff; }
  .searchrow input { width: 157px; height: 24px; border: 1px solid #707070; padding: 0 2px; margin-left: 1px; outline: 0; }
  .searchrow input::placeholder { color: #777; opacity: 1; }
  .searchrow button { flex: 1; justify-content: center; border-right: 1px solid #8c8c8c; }
  .comptree { background: #fff; border: 1px solid #828790; }
  .comptree .row > .chev { margin-left: 7px; }
  .comptree .rail1 { width: 32px; }
  .comptree .leaf { padding-left: 1px; padding-right: 2px; gap: 4px; }
  .comptree .leaf .icon { width: 14px; height: 14px; }
  .comptree .leaf .label { padding: 0 2px; }
  .chosen { background: #cce8ff; }
  .chosen .label { background: #2a6dce; }

  .props { position: relative; flex: 1; min-width: 0; display: flex; flex-direction: column; background: #fff; font-family: "Liberation Serif", "Noto Sans CJK SC", sans-serif; margin-bottom: 2px; border-left: 1px solid #d9d9d9; }
  .tabs { display: flex; height: 21px; flex: none; border-bottom: 1px solid #d9d9d9; }
  .tab { padding: 0 7px; height: 21px; background: #fff; border-top: 1px solid #d9d9d9; border-right: 1px solid #d9d9d9; }
  .sheet { flex: 1; min-height: 0; display: flex; justify-content: space-between; align-items: stretch; border: 1px solid #a0a0a0; margin: 4px 4px 4px 3px; padding-right: 2px; }
  .sheet .thumb { height: 310px; }
  table { border-collapse: collapse; table-layout: fixed; width: 369px; align-self: flex-start; }
  .c1 { width: 21px; } .c2 { width: 191px; } .c3 { width: 126px; } .c4 { width: 31px; }
  th, td { border: 1px solid #c0c0c0; border-left: 0; border-top: 0; padding: 0; height: 19px; line-height: 16px; font-weight: normal; }
  thead th { height: 23px; background: linear-gradient(#fff, #efefef); }
  thead th.hot { background: linear-gradient(#f9d58c, #f2bf63); color: #5f0838; }
  tbody th { background: #f5f5f5; }
  .name { position: relative; padding-left: 20px; }
  .val { padding-left: 2px; position: relative; }
  .blue .name { color: #00f; }
  .grey .name, .grey .val { color: #808080; }
  .picked th { background: #ffd08a; color: #6b0a30; }
  .picked .name { background: #0078d7; color: #fff; }
  .picked .val { background: #d9eaf9; }
  .chk { text-align: center; }
  .chk input { appearance: none; display: block; margin: 0 auto; width: 13px; height: 13px; border: 1px solid #333; background: #fff; }
  .plus { position: absolute; left: 2px; top: 2px; width: 13px; height: 13px; border: 1px solid #aaa; background: linear-gradient(#000, #000) center / 7px 1px no-repeat, linear-gradient(#000, #000) center / 1px 7px no-repeat; }
  .dot { position: absolute; right: 31px; top: 9px; width: 4px; height: 4px; background: #f00; }
  .dot.small { right: 47px; top: 13px; width: 2px; height: 2px; }

  .dialog { position: absolute; right: 22px; top: 20px; bottom: 3px; width: 521px; display: flex; flex-direction: column; border: 1px solid #555; background: linear-gradient(#bccbd9, #d7e4f1 30px); padding: 0 8px 8px; }
  .dialog h2 { color: #929292; line-height: 16px; padding-top: 11px; height: 29px; flex: none; font-family: "Open Sans", "Noto Sans CJK SC", sans-serif; }
  .dtabs { display: flex; align-items: flex-end; height: 22px; flex: none; background: #f0f0f0; }
  .dtabs button { height: 19px; width: 47px; padding-left: 6px; border: 1px solid #d9d9d9; border-bottom: 0; }
  .dtabs .front { height: 22px; width: 52px; padding-left: 6px; background: #fff; }
  .dbody { flex: 1; min-height: 0; display: flex; flex-direction: column; background: #fff; border: 1px solid #dcdcdc; padding: 2px 3px 3px; margin-bottom: 3px; font-family: "Open Sans", "Noto Sans CJK SC", sans-serif; }
  .dstrip, .dinfo { height: 28px; flex: none; padding: 0 3px; background: linear-gradient(#fcfcfc, #efefef); }
  .dstrip { gap: 10px; }
  .dstrip .grip { margin-right: -3px; }
  .dstrip .sep { margin: 0 -2px; }
  .dinfo { gap: 6px; height: 29px; background: #f0f0f0; }
  .dinfo label { color: #777; margin-right: -4px; }
  .dinfo .pick { width: 133px; color: #666; }
  .dinfo .pick select { border: 1px solid #707070; background: #f7f7f7; height: 23px; }
  .grip { width: 2px; height: 14px; background: repeating-linear-gradient(#bbb 0 2px, transparent 2px 4px); }
  .canvas { display: block; flex: 1; min-height: 0; width: 100%; background: #000; outline: 2px solid #f00; outline-offset: -2px; }
  .dim { font: 39px "Liberation Serif", serif; fill: #fff; }
  .origin { font: 11px "Liberation Sans", sans-serif; fill: #555; }
  .dstatus { display: flex; gap: 2px; height: 20px; flex: none; background: #f5f5f5; }
  .dstatus span { border: 1px solid #d5d5d5; width: 147px; background: linear-gradient(#fdfdfd, #f0f0f0); padding-left: 1px; line-height: 18px; }
  .dstatus span + span { flex: 1; display: flex; justify-content: flex-end; align-items: flex-end; padding: 1px; }
  .dstatus svg { width: 12px; height: 12px; fill: #bbb; }

  .status { position: relative; display: flex; gap: 2px; height: 20px; flex: none; font-family: "Liberation Serif", "Noto Sans CJK SC", sans-serif; }
  .status > span { border: 1px solid #d5d5d5; background: linear-gradient(#fdfdfd, #f0f0f0); width: 148px; padding-left: 1px; line-height: 18px; }
  .status > span:nth-child(2) { width: 78px; }
  .status > span:nth-child(3) { width: 98px; }
  .status > span:nth-child(4) { width: 48px; }
  .status > span:nth-child(5) { flex: 1; }
  .ime { position: absolute; right: 0; bottom: 0; height: 24px; display: flex; align-items: center; gap: 6px; padding: 0 3px 0 32px; background: #fff; border: 1px solid #b8cfe0; }
  .ime .big { position: absolute; left: -3px; top: -4px; width: 28px; height: 28px; }
  .ime b { color: #2275c4; font-size: 16px; width: 16px; text-align: center; }

  .taskbar { display: flex; align-items: center; height: 40px; flex: none; background: #020d13; color: #e8e8e8; }
  .start { width: 48px; height: 40px; justify-content: center; }
  .find { display: flex; align-items: center; width: 344px; height: 40px; background: #333; padding: 0 12px 0 9px; flex: none; }
  .find i { width: 21px; height: 21px; border: 3px solid #eee; border-radius: 50%; }
  .find input { flex: 1; min-width: 0; margin-left: 6px; font-size: 14px; outline: 0; }
  .find input::placeholder { color: #9b9b9b; opacity: 1; }
  .apps { display: flex; align-items: center; padding-left: 2px; }
  .apps button { position: relative; width: 48px; height: 40px; justify-content: center; border-bottom: 3px solid transparent; border-top: 3px solid transparent; margin-right: 1px; }
  .apps .icon { width: 23px; height: 23px; }
  .apps .mini { position: absolute; right: 4px; top: 0; width: 14px; height: 14px; }
  .split { width: 4px; height: 16px; border: 1px solid #3d454a; border-width: 0 1px; margin: 0 11px 0 9px; }
  .apps .run { background: linear-gradient(#76b9ed, #76b9ed) center bottom / 40px 3px no-repeat border-box; }
  .apps .active { background: linear-gradient(#76b9ed, #76b9ed) center bottom / 48px 3px no-repeat border-box, #343f44; }
  .cpu, .clock { text-align: center; line-height: 18px; }
  .cpu { margin-left: auto; margin-right: 17px; }
  .tray { display: flex; align-items: center; gap: 8px; }
  .tray b { font-size: 14px; font-weight: normal; width: 16px; text-align: center; }
  .clock { width: 92px; }
  .notes { width: 44px; height: 40px; justify-content: center; padding-right: 12px; border-right: 1px solid #4a5357; margin-right: 3px; }
</style>
